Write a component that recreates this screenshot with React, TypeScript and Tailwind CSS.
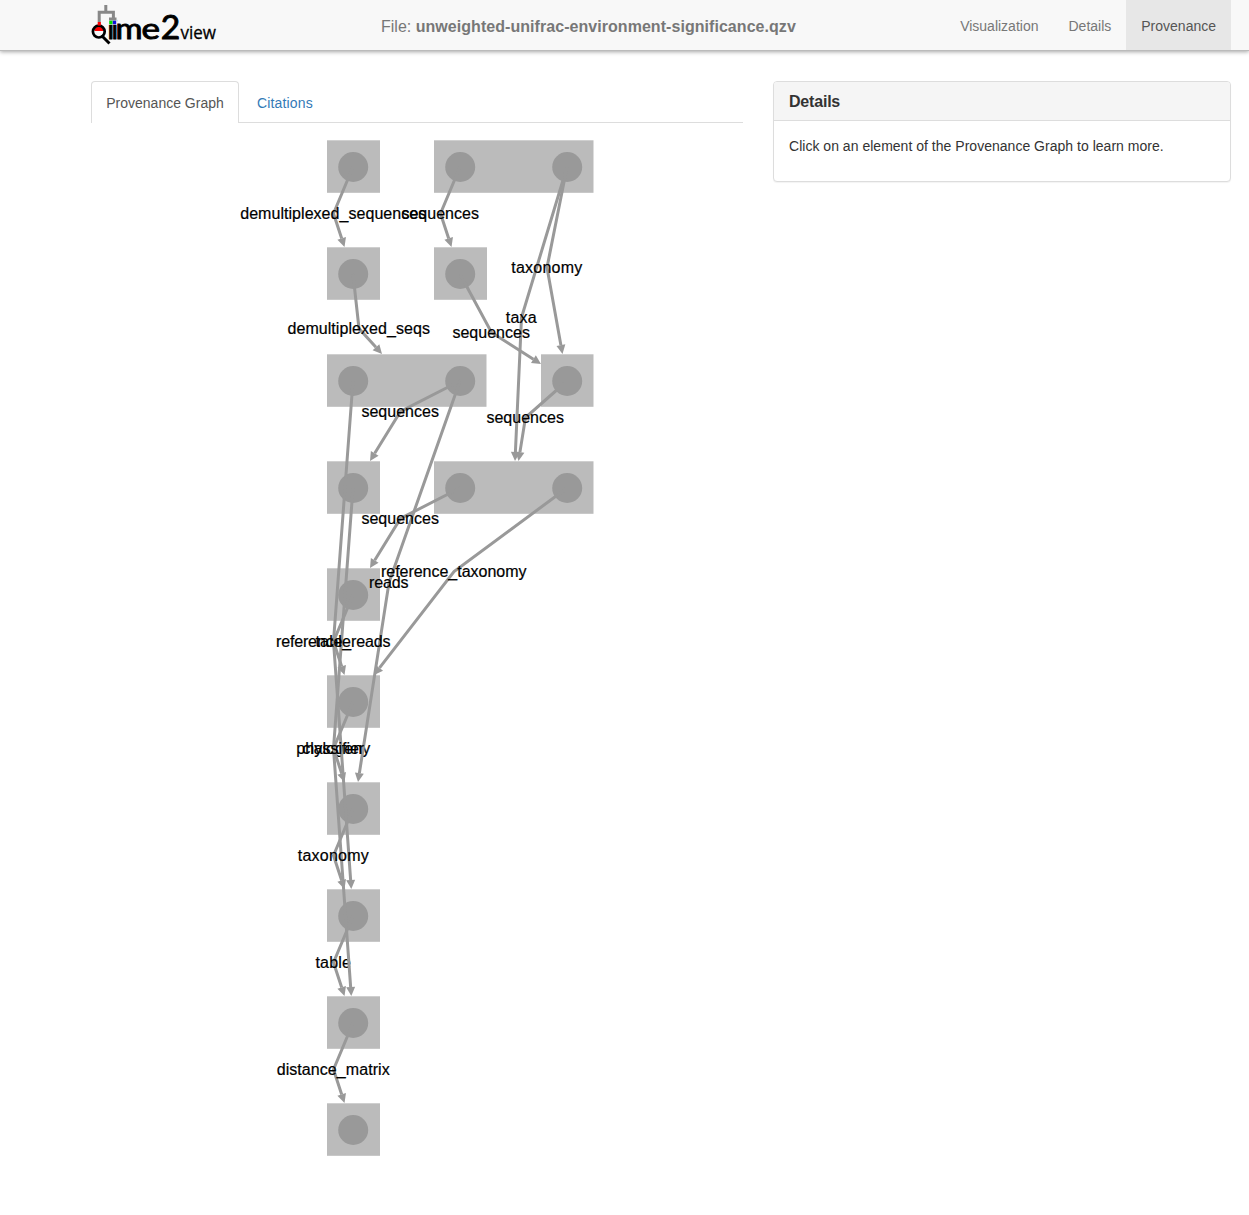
type Point = [number, number];

interface Edge {
  label: string;
  width: number;
  points: [Point, Point, Point];
}

const groups: { x: number; y: number; w: number }[] = [
  { x: 327, y: 140, w: 53 },
  { x: 434, y: 140, w: 159.5 },
  { x: 327, y: 247, w: 53 },
  { x: 434, y: 247, w: 53 },
  { x: 327, y: 354, w: 159.5 },
  { x: 541, y: 354, w: 52.5 },
  { x: 327, y: 461, w: 53 },
  { x: 434, y: 461, w: 159.5 },
  { x: 327, y: 568, w: 53 },
  { x: 327, y: 675, w: 53 },
  { x: 327, y: 782, w: 53 },
  { x: 327, y: 889, w: 53 },
  { x: 327, y: 996, w: 53 },
  { x: 327, y: 1103, w: 53 },
];

const nodes: Point[] = [
  [353, 167], [460, 167], [567, 167],
  [353, 274], [460, 274],
  [353, 381], [460, 381], [567, 381],
  [353, 488], [460, 488], [567, 488],
  [353, 595], [353, 702], [353, 809],
  [353, 916], [353, 1023], [353, 1130],
];

// Painted in order: later edges and their labels lie over earlier ones.
const edges: Edge[] = [
  { label: 'table', width: 35.5, points: [[353, 916], [333.5, 962.5], [344.5, 996]] },
  { label: 'phylogeny', width: 74, points: [[353, 488], [333.5, 748.5], [351.3, 996]] },
  { label: 'table', width: 35.5, points: [[353, 381], [333.5, 641.5], [351.3, 889]] },
  { label: 'taxa', width: 31, points: [[567, 167], [521.5, 317.5], [515, 461]] },
  { label: 'reads', width: 39.5, points: [[460, 381], [389, 582.5], [358, 782]] },
  { label: 'demultiplexed_sequences', width: 186, points: [[353, 167], [333.5, 213.5], [344.5, 247]] },
  { label: 'sequences', width: 77.5, points: [[460, 167], [440.5, 213.5], [451.5, 247]] },
  { label: 'demultiplexed_seqs', width: 142.5, points: [[353, 274], [359, 328.5], [382, 354]] },
  { label: 'taxonomy', width: 71, points: [[567, 167], [547, 267.5], [562.5, 354]] },
  { label: 'sequences', width: 77.5, points: [[460, 274], [491.5, 332.5], [541, 364]] },
  { label: 'sequences', width: 77.5, points: [[460, 381], [400.5, 411.5], [370, 461]] },
  { label: 'sequences', width: 77.5, points: [[567, 381], [525.5, 417.5], [518.5, 461]] },
  { label: 'sequences', width: 77.5, points: [[460, 488], [400.5, 518.5], [370, 568]] },
  { label: 'reference_reads', width: 114.5, points: [[353, 595], [333.5, 641.5], [344.5, 675]] },
  { label: 'reference_taxonomy', width: 145.5, points: [[567, 488], [454, 571.5], [374, 675]] },
  { label: 'classifier', width: 62, points: [[353, 702], [333.5, 748.5], [344.5, 782]] },
  { label: 'taxonomy', width: 71, points: [[353, 809], [333.5, 855.5], [344.5, 889]] },
  { label: 'distance_matrix', width: 113, points: [[353, 1023], [333.5, 1069.5], [344.5, 1103]] },
];

function EdgeView({ label, width, points }: Edge) {
  const [a, b, c] = points;
  const dx = c[0] - b[0];
  const dy = c[1] - b[1];
  const len = Math.hypot(dx, dy);
  const ux = dx / len;
  const uy = dy / len;
  const bx = c[0] - ux * 9;
  const by = c[1] - uy * 9;
  const head = `${c[0]},${c[1]} ${bx - uy * 4.5},${by + ux * 4.5} ${bx + uy * 4.5},${by - ux * 4.5}`;
  return (
    <g>
      <polyline
        points={`${a.join(',')} ${b.join(',')} ${bx},${by}`}
        fill="none"
        stroke="#999"
        strokeWidth="3"
      />
      <polygon points={head} fill="#999" />
      <text
        x={b[0] - width / 2 - 0.3}
        y={b[1] + 5.3}
        textLength={width}
        fontSize="16"
        fontFamily="'Liberation Sans', Arial, sans-serif"
        fill="#000"
        stroke="#000"
        strokeWidth="0.2"
      >
        {label}
      </text>
    </g>
  );
}

function ProvenanceGraph() {
  return (
    <svg className="block h-[1092px] w-[652px]" viewBox="91 123 652 1092">
      {groups.map((g) => (
        <rect key={`${g.x}-${g.y}`} x={g.x} y={g.y + 0.3} width={g.w} height="52.5" fill="#bbb" />
      ))}
      {nodes.map(([x, y]) => (
        <circle key={`${x}-${y}`} cx={x + 0.2} cy={y} r="15" fill="#999" />
      ))}
      {edges.map((e, i) => (
        <EdgeView key={i} {...e} />
      ))}
    </svg>
  );
}

function Logo() {
  return (
    <svg className="block h-[50px] w-[130px] shrink-0" viewBox="91 0 130 50" aria-label="qiime2view">
      <g fontFamily="Lato, sans-serif" fill="#000" stroke="#000" strokeWidth="0.9">
        <text x="107.6" y="39.2" fontSize="27">i</text>
        <text x="111.6" y="39.2" fontSize="27">i</text>
        <text x="115.6" y="39.2" fontSize="28" textLength="27" lengthAdjust="spacingAndGlyphs">m</text>
        <text x="141.4" y="39.2" fontSize="28" textLength="18.5" lengthAdjust="spacingAndGlyphs">e</text>
        <text x="160.7" y="39.2" fontSize="33" textLength="19.5" lengthAdjust="spacingAndGlyphs">2</text>
      </g>
      <text x="180.5" y="39.2" fontSize="17.5" fontFamily="'Open Sans', sans-serif" textLength="35.5" lengthAdjust="spacingAndGlyphs" stroke="#000" strokeWidth="0.3">view</text>
      <rect x="107" y="15" width="10" height="9.7" fill="#f8f8f8" />
      <path d="M105.8 5v7M99.2 22V12.2h14.2V19" fill="none" stroke="#888" strokeWidth="3" />
      <rect x="109" y="17.5" width="7.5" height="3" fill="#888" />
      <rect x="109.2" y="20.7" width="3.4" height="3.6" fill="#0d0" />
      <rect x="112.8" y="20.7" width="3.4" height="3.6" fill="#11d" />
      <circle cx="98.8" cy="31.6" r="5.7" fill="#f8f8f8" />
      <path d="M94.5 31c0-6 9-6 9 0z" fill="red" />
      <circle cx="98.8" cy="31.6" r="5.9" fill="none" stroke="#000" strokeWidth="2.7" />
      <rect x="97.7" y="22" width="3.2" height="3.5" fill="red" />
      <path d="M101.5 35.5l8 8" stroke="#000" strokeWidth="3" />
    </svg>
  );
}

export default function App() {
  return (
    <div className="h-[1215px] overflow-hidden bg-white font-['Liberation_Sans',Arial,sans-serif] text-sm text-[#333]">
      <header className="flex h-[51px] justify-between border-b border-[#bbb] bg-[#f8f8f8] pr-[18px] pl-[91px] text-[#777] shadow-[0_1px_4px_rgba(0,0,0,0.35)]">
        <Logo />
        <div className="ml-[160px] pt-[15px] text-base leading-[23px] whitespace-nowrap">
          File: <b className="tracking-[0.05px]">unweighted-unifrac-environment-significance.qzv</b>
        </div>
        <nav className="ml-auto flex h-[50px] leading-[53px]">
          <a className="px-[15px]">Visualization</a>
          <a className="px-[15px]">Details</a>
          <a className="bg-[#e7e7e7] px-[15px] text-[#555]">Provenance</a>
        </nav>
      </header>
      <main className="flex items-start gap-[30px] pt-[30px] pl-[91px]">
        <section className="w-[652px]">
          <div className="flex h-[42px] border-b border-[#ddd] leading-[43px]">
            <a className="h-[42px] w-[148px] rounded-t border border-b-0 border-[#ddd] bg-white text-center text-[#555]">
              Provenance Graph
            </a>
            <a className="ml-[3px] px-[15px] pt-px tracking-[0.15px] text-[#337ab7]">Citations</a>
          </div>
          <ProvenanceGraph />
        </section>
        <aside className="w-[458px] overflow-hidden rounded border border-[#ddd] bg-white shadow-[0_1px_1px_rgba(0,0,0,0.05)]">
          <h3 className="h-[39px] border-b border-[#ddd] bg-[#f5f5f5] px-[15px] text-base leading-[39px] font-bold tracking-[-0.2px]">
            Details
          </h3>
          <p className="h-[60px] px-[15px] pt-[15px] leading-5 tracking-[0.02px]">
            Click on an element of the Provenance Graph to learn more.
          </p>
        </aside>
      </main>
    </div>
  );
}
